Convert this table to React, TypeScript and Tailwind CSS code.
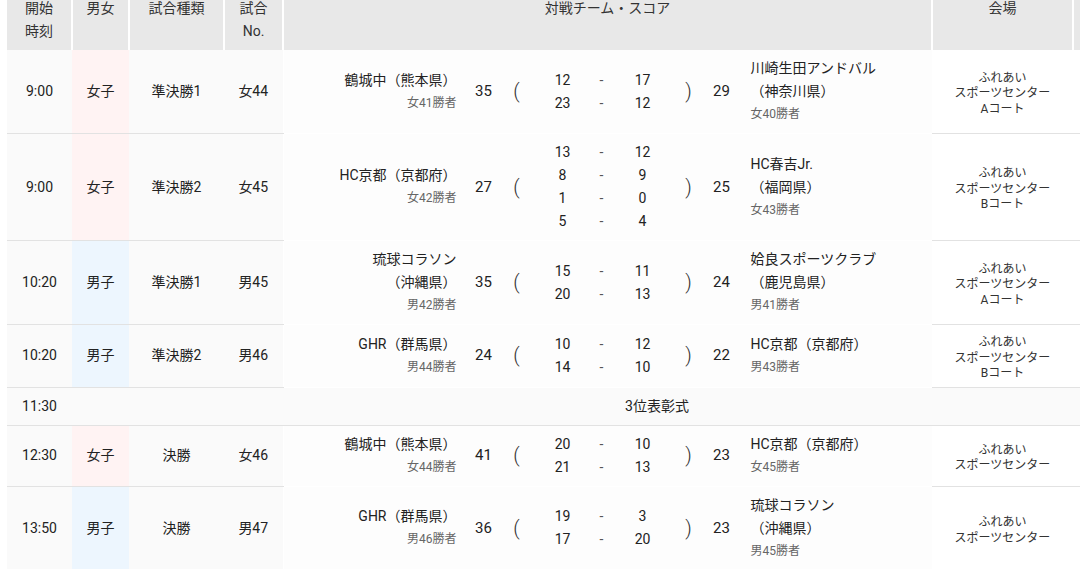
type Match = {
  time: string;
  gender: "女子" | "男子";
  type: string;
  no: string;
  left: string[];
  leftSub: string;
  leftTotal: number;
  periods: [number, number][];
  rightTotal: number;
  right: string[];
  rightSub: string;
  venue: string[];
};

type Row = Match | { time: string; ceremony: string };

const rows: Row[] = [
  {
    time: "9:00",
    gender: "女子",
    type: "準決勝1",
    no: "女44",
    left: ["鶴城中（熊本県）"],
    leftSub: "女41勝者",
    leftTotal: 35,
    periods: [
      [12, 17],
      [23, 12],
    ],
    rightTotal: 29,
    right: ["川崎生田アンドバル", "（神奈川県）"],
    rightSub: "女40勝者",
    venue: ["ふれあい", "スポーツセンター", "Aコート"],
  },
  {
    time: "9:00",
    gender: "女子",
    type: "準決勝2",
    no: "女45",
    left: ["HC京都（京都府）"],
    leftSub: "女42勝者",
    leftTotal: 27,
    periods: [
      [13, 12],
      [8, 9],
      [1, 0],
      [5, 4],
    ],
    rightTotal: 25,
    right: ["HC春吉Jr.", "（福岡県）"],
    rightSub: "女43勝者",
    venue: ["ふれあい", "スポーツセンター", "Bコート"],
  },
  {
    time: "10:20",
    gender: "男子",
    type: "準決勝1",
    no: "男45",
    left: ["琉球コラソン", "（沖縄県）"],
    leftSub: "男42勝者",
    leftTotal: 35,
    periods: [
      [15, 11],
      [20, 13],
    ],
    rightTotal: 24,
    right: ["姶良スポーツクラブ", "（鹿児島県）"],
    rightSub: "男41勝者",
    venue: ["ふれあい", "スポーツセンター", "Aコート"],
  },
  {
    time: "10:20",
    gender: "男子",
    type: "準決勝2",
    no: "男46",
    left: ["GHR（群馬県）"],
    leftSub: "男44勝者",
    leftTotal: 24,
    periods: [
      [10, 12],
      [14, 10],
    ],
    rightTotal: 22,
    right: ["HC京都（京都府）"],
    rightSub: "男43勝者",
    venue: ["ふれあい", "スポーツセンター", "Bコート"],
  },
  { time: "11:30", ceremony: "3位表彰式" },
  {
    time: "12:30",
    gender: "女子",
    type: "決勝",
    no: "女46",
    left: ["鶴城中（熊本県）"],
    leftSub: "女44勝者",
    leftTotal: 41,
    periods: [
      [20, 10],
      [21, 13],
    ],
    rightTotal: 23,
    right: ["HC京都（京都府）"],
    rightSub: "女45勝者",
    venue: ["ふれあい", "スポーツセンター"],
  },
  {
    time: "13:50",
    gender: "男子",
    type: "決勝",
    no: "男47",
    left: ["GHR（群馬県）"],
    leftSub: "男46勝者",
    leftTotal: 36,
    periods: [
      [19, 3],
      [17, 20],
    ],
    rightTotal: 23,
    right: ["琉球コラソン", "（沖縄県）"],
    rightSub: "男45勝者",
    venue: ["ふれあい", "スポーツセンター"],
  },
];

const th = "bg-[#e8e8e8] border-r-2 border-white align-top text-center font-normal px-1 py-[7px]";
const td = "bg-[#fafafa] border-b border-[#e2e2e2] text-center align-middle py-[7px]";

function ScoreCell({ m }: { m: Match }) {
  return (
    <div className="flex items-center">
      <div className="w-[173px] text-right">
        {m.left.map((l) => (
          <div key={l}>{l}</div>
        ))}
        <div className="text-[12px] text-[#666]">{m.leftSub}</div>
      </div>
      <div className="w-[54px] text-center text-[15px]">{m.leftTotal}</div>
      <div className="w-[12px] text-center text-[20px] font-light text-[#333]">(</div>
      <div className="w-[10px]" />
      <div className="flex flex-col">
        {m.periods.map((p, i) => (
          <div key={i} className="flex">
            <div className="w-[60px] text-center">{p[0]}</div>
            <div className="w-[18px] text-center text-[#555]">-</div>
            <div className="w-[64px] text-center">{p[1]}</div>
          </div>
        ))}
      </div>
      <div className="w-[28px] text-center text-[20px] font-light text-[#333]">)</div>
      <div className="w-[38px] text-center text-[15px]">{m.rightTotal}</div>
      <div className="pl-[10px] text-left">
        {m.right.map((l) => (
          <div key={l}>{l}</div>
        ))}
        <div className="text-[12px] text-[#666]">{m.rightSub}</div>
      </div>
    </div>
  );
}

export default function App() {
  return (
    <div
      className="w-[1080px] h-[569px] overflow-hidden bg-white text-[#222] text-[14px] leading-[23px]"
      style={{ fontFamily: 'Roboto, "Noto Sans CJK JP", sans-serif' }}
    >
      <table className="table-fixed border-collapse w-[1235px] ml-[7px] -mt-[10px]">
        <colgroup>
          <col className="w-[65px]" />
          <col className="w-[57px]" />
          <col className="w-[95px]" />
          <col className="w-[59px]" />
          <col className="w-[649px]" />
          <col className="w-[141px]" />
          <col className="w-[169px]" />
        </colgroup>
        <thead>
          <tr className="text-[#333]">
            <th className={th}>
              開始
              <br />
              時刻
            </th>
            <th className={th}>男女</th>
            <th className={th}>試合種類</th>
            <th className={th}>
              試合
              <br />
              No.
            </th>
            <th className={th}>対戦チーム・スコア</th>
            <th className={th}>会場</th>
            <th className={th}></th>
          </tr>
        </thead>
        <tbody>
          {rows.map((r, i) => {
            if ("ceremony" in r) {
              return (
                <tr key={i}>
                  <td className={td}>{r.time}</td>
                  <td className={td} colSpan={6}>
                    {r.ceremony}
                  </td>
                </tr>
              );
            }
            return (
              <tr key={i}>
                <td className={td}>{r.time}</td>
                <td className={`${td} ${r.gender === "女子" ? "!bg-[#fff3f3]" : "!bg-[#edf6fe]"}`}>{r.gender}</td>
                <td className={td}>{r.type}</td>
                <td className={td}>{r.no}</td>
                <td className={`${td} !bg-[#fdfdfd] border-l border-white`}>
                  <ScoreCell m={r} />
                </td>
                <td className={`${td} !bg-white text-[12px] leading-[15.5px] text-[#333] !pt-[10px] !pb-[5px]`}>
                  {r.venue.map((v) => (
                    <div key={v}>{v}</div>
                  ))}
                </td>
                <td className={`${td} !bg-white`}></td>
              </tr>
            );
          })}
        </tbody>
      </table>
    </div>
  );
}
